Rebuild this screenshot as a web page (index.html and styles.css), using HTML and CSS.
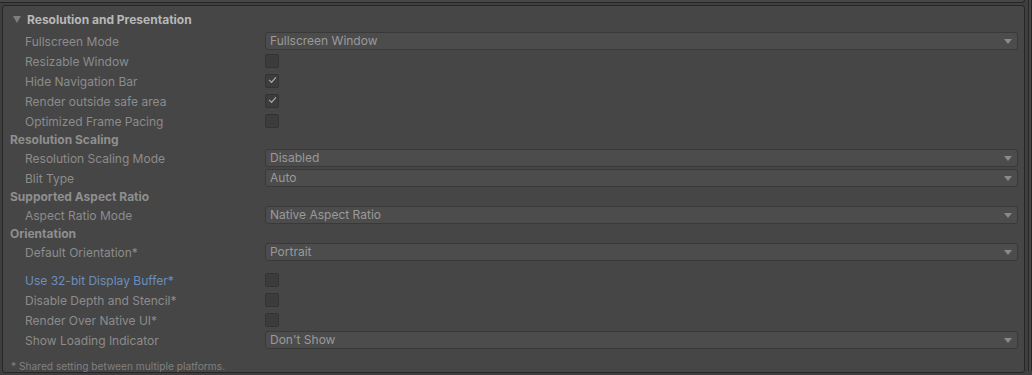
FILE: index.html
```html
<!DOCTYPE html>
<html lang="en">
<head>
    <meta charset="UTF-8">
    <title>Player Settings - Resolution and Presentation</title>
    <link rel="stylesheet" href="styles.css">
</head>
<body>

<div class="prev-section"></div>

<div class="frame">
    <div class="panel">
        <div class="foldout">
            <span class="fold-arrow"></span>
            <span>Resolution and Presentation</span>
        </div>

        <div class="row">
            <label>Fullscreen Mode</label>
            <div class="dropdown">Fullscreen Window</div>
        </div>
        <div class="row">
            <label>Resizable Window</label>
            <span class="checkbox"></span>
        </div>
        <div class="row">
            <label>Hide Navigation Bar</label>
            <span class="checkbox checked"></span>
        </div>
        <div class="row">
            <label>Render outside safe area</label>
            <span class="checkbox checked"></span>
        </div>
        <div class="row">
            <label>Optimized Frame Pacing</label>
            <span class="checkbox"></span>
        </div>

        <div class="subheader">Resolution Scaling</div>
        <div class="row">
            <label>Resolution Scaling Mode</label>
            <div class="dropdown">Disabled</div>
        </div>
        <div class="row">
            <label>Blit Type</label>
            <div class="dropdown">Auto</div>
        </div>

        <div class="subheader">Supported Aspect Ratio</div>
        <div class="row">
            <label>Aspect Ratio Mode</label>
            <div class="dropdown">Native Aspect Ratio</div>
        </div>

        <div class="subheader">Orientation</div>
        <div class="row">
            <label>Default Orientation*</label>
            <div class="dropdown">Portrait</div>
        </div>

        <div class="row spaced">
            <label class="modified">Use 32-bit Display Buffer*</label>
            <span class="checkbox"></span>
        </div>
        <div class="row">
            <label>Disable Depth and Stencil*</label>
            <span class="checkbox"></span>
        </div>
        <div class="row">
            <label>Render Over Native UI*</label>
            <span class="checkbox"></span>
        </div>
        <div class="row">
            <label>Show Loading Indicator</label>
            <div class="dropdown">Don't Show</div>
        </div>

        <p class="note">* Shared setting between multiple platforms.</p>
    </div>
    <div class="scroll-edge"></div>
</div>

</body>
</html>
```

FILE: styles.css
```css
body {
    margin: 0;
    background-color: #3f3f3f;
    font-family: Inter, "Noto Sans", sans-serif;
    font-size: 12px;
    color: #8c8c8c;
    width: 1032px;
    height: 375px;
    overflow: hidden;
}
.prev-section {
    height: 2px;
    margin-right: 7px;
    background: #464646;
    border-bottom: 1px solid #262626;
    border-right: 1px solid #262626;
    border-bottom-right-radius: 3px;
}
.frame {
    display: flex;
    margin-top: 2px;
    height: 370px;
}
.panel {
    width: 1023px;
    margin-left: 2px;
    padding: 2px 0 0 7px;
    background: #464646;
    border: 1px solid #262626;
    border-radius: 3px;
    box-sizing: border-box;
    height: 368px;
}
.scroll-edge {
    width: 2px;
    margin-left: 3px;
    border-left: 1px solid #262626;
    border-right: 1px solid #262626;
    background: #464646;
    height: 372px;
    margin-top: -6px;
}
.foldout {
    display: flex;
    align-items: center;
    height: 23px;
    padding-left: 3px;
    font-weight: 700;
    color: #b8b8b8;
}
.fold-arrow {
    width: 0;
    height: 0;
    border-left: 4px solid transparent;
    border-right: 4px solid transparent;
    border-top: 7px solid #7e7e7e;
    margin-right: 6px;
}
.row {
    display: flex;
    align-items: center;
    height: 20px;
}
.row.spaced {
    margin-top: 8px;
}
.row label {
    width: 240px;
    padding-left: 15px;
    flex-shrink: 0;
    white-space: nowrap;
}
.row label.modified {
    color: #6c8ebf;
}
.subheader {
    height: 17px;
    line-height: 17px;
    font-weight: 700;
    color: #8f8f8f;
}
.dropdown {
    position: relative;
    width: 753px;
    height: 18px;
    line-height: 16px;
    box-sizing: border-box;
    padding-left: 4px;
    background: #4c4c4c;
    border: 1px solid #393939;
    border-radius: 3px;
    color: #9a9a9a;
}
.dropdown::after {
    content: "";
    position: absolute;
    right: 5px;
    top: 6px;
    border-left: 4px solid transparent;
    border-right: 4px solid transparent;
    border-top: 5px solid #8a8a8a;
}
.checkbox {
    position: relative;
    width: 14px;
    height: 14px;
    box-sizing: border-box;
    background: #3c3c3c;
    border: 1px solid #333333;
    border-radius: 2px;
}
.checkbox.checked::after {
    content: "";
    position: absolute;
    left: 3px;
    top: 2px;
    width: 6px;
    height: 3px;
    border-left: 1.5px solid #b8b8b8;
    border-bottom: 1.5px solid #b8b8b8;
    transform: rotate(-48deg);
}
.note {
    margin: 10px 0 0;
    padding-left: 1px;
    font-size: 10.2px;
    color: #808080;
}
```
